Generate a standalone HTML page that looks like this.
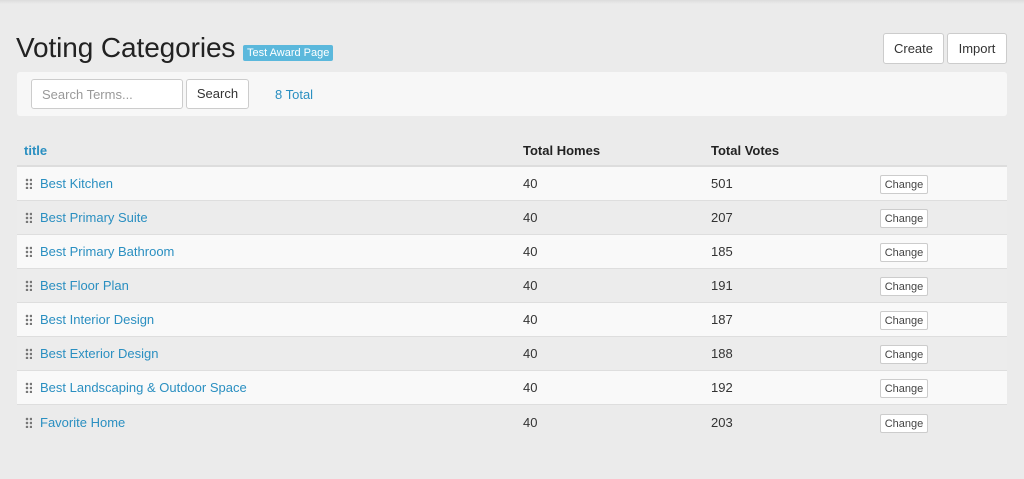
<!DOCTYPE html>
<html><head><meta charset="utf-8"><style>
*{box-sizing:border-box;margin:0;padding:0}
body{width:1024px;height:479px;background:#ebebeb;font-family:"Liberation Sans",sans-serif;position:relative;overflow:hidden;color:#222}
.topshade{position:absolute;left:0;top:0;width:1024px;height:4px;background:linear-gradient(#dcdcdc,#ebebeb)}
h1{position:absolute;left:16px;top:32px;font-size:28px;font-weight:normal;color:#222;letter-spacing:-0.1px}
.badge{position:absolute;left:243px;top:45px;background:#5bb8dc;color:#fff;font-size:11px;padding:1px 4px;border-radius:2px;line-height:14px}
.btn{position:absolute;background:#fff;border:1px solid #ccc;border-radius:3px;font-size:13px;color:#333;text-align:center}
.bar{position:absolute;left:17px;top:72px;width:990px;height:44px;background:#f7f7f7;border-radius:3px}
.inp{position:absolute;left:31px;top:79px;width:152px;height:30px;background:#fff;border:1px solid #ccc;border-radius:3px;font-size:13px;color:#999;padding:7px 10px}
.total{position:absolute;left:275px;top:87px;font-size:13px;color:#2a8fc1}
.th{position:absolute;top:143px;font-size:13px;font-weight:bold;color:#222}
.hline{position:absolute;left:17px;top:165px;width:990px;height:2px;background:#ddd}
.row{position:absolute;left:17px;width:990px;height:34px;border-bottom:1px solid #dedede}
.row span{position:absolute;top:9px;font-size:13px}
.t{left:23px;color:#2a8fc1}
.n{color:#333}
.chg{position:absolute;left:863px;top:8px;width:48px;height:19px;background:#fff;border:1px solid #ccc;border-radius:2px;font-size:11px;color:#444;display:flex;align-items:center;justify-content:center}
.grip{position:absolute;left:8px;top:11px;width:7px;height:11px;background-image:radial-gradient(circle,#777 1.2px,transparent 1.4px);background-size:4px 4px}
</style></head><body>
<div class="topshade"></div>
<h1>Voting Categories</h1>
<div class="badge">Test Award Page</div>
<div class="btn" style="left:883px;top:33px;width:61px;height:31px;line-height:29px">Create</div>
<div class="btn" style="left:947px;top:33px;width:60px;height:31px;line-height:29px">Import</div>
<div class="bar"></div>
<div class="inp">Search Terms...</div>
<div class="btn" style="left:186px;top:79px;width:63px;height:30px;line-height:28px">Search</div>
<div class="total">8 Total</div>
<div class="th" style="left:24px;color:#2a8fc1">title</div>
<div class="th" style="left:523px">Total Homes</div>
<div class="th" style="left:711px">Total Votes</div>
<div class="hline"></div>

<div class="row" style="top:167px;background:#f9f9f9"><div class="grip"></div><span class="t">Best Kitchen</span><span class="n" style="left:506px">40</span><span class="n" style="left:694px">501</span><div class="chg">Change</div></div>
<div class="row" style="top:201px;background:#ececec"><div class="grip"></div><span class="t">Best Primary Suite</span><span class="n" style="left:506px">40</span><span class="n" style="left:694px">207</span><div class="chg">Change</div></div>
<div class="row" style="top:235px;background:#f9f9f9"><div class="grip"></div><span class="t">Best Primary Bathroom</span><span class="n" style="left:506px">40</span><span class="n" style="left:694px">185</span><div class="chg">Change</div></div>
<div class="row" style="top:269px;background:#ececec"><div class="grip"></div><span class="t">Best Floor Plan</span><span class="n" style="left:506px">40</span><span class="n" style="left:694px">191</span><div class="chg">Change</div></div>
<div class="row" style="top:303px;background:#f9f9f9"><div class="grip"></div><span class="t">Best Interior Design</span><span class="n" style="left:506px">40</span><span class="n" style="left:694px">187</span><div class="chg">Change</div></div>
<div class="row" style="top:337px;background:#ececec"><div class="grip"></div><span class="t">Best Exterior Design</span><span class="n" style="left:506px">40</span><span class="n" style="left:694px">188</span><div class="chg">Change</div></div>
<div class="row" style="top:371px;background:#f9f9f9"><div class="grip"></div><span class="t">Best Landscaping &amp; Outdoor Space</span><span class="n" style="left:506px">40</span><span class="n" style="left:694px">192</span><div class="chg">Change</div></div>
<div class="row" style="top:406px;background:#ebebeb;border-bottom:none"><div class="grip"></div><span class="t">Favorite Home</span><span class="n" style="left:506px">40</span><span class="n" style="left:694px">203</span><div class="chg">Change</div></div>
</body></html>
